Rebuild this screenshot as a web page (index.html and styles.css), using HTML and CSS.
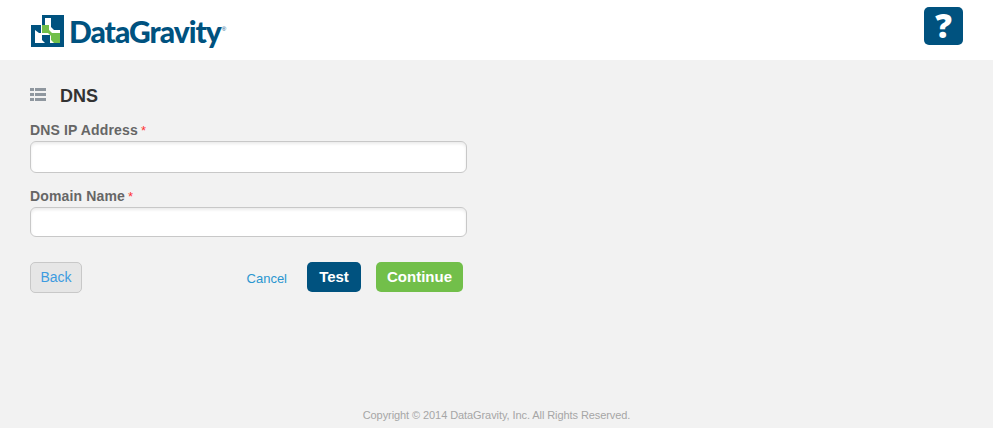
FILE: index.html
```html
<!DOCTYPE html>
<html lang="en">
<head>
    <meta charset="UTF-8">
    <title>DataGravity - DNS</title>
    <link rel="stylesheet" href="styles.css">
</head>
<body>
    <header class="topbar">
        <div class="logo">
            <svg class="logo-mark" width="33" height="32" viewBox="0 0 33 32">
                <path fill="#00527f" fill-rule="evenodd" d="M11 0H33V32H0V10H11ZM14 3V10H4V28H29V3Z"/>
                <path fill="#00527f" d="M20 3H29V15H23L20 12Z"/>
                <path fill="#00527f" d="M4 10H10V18H8L4 15Z"/>
                <path fill="#00527f" d="M11 20H19V28H14L11 25Z"/>
                <path fill="#72bf4a" d="M11 10H18V15L19 18H11Z"/>
                <path fill="#72bf4a" d="M20 18H29V28H23L20 25Z"/>
                <path fill="#72bf4a" d="M17 14L22 19L20 21L15 16Z"/>
            </svg>
            <span class="logo-text">DataGravity</span><span class="logo-reg">®</span>
        </div>
        <a class="help" href="#">?</a>
    </header>
    <main class="content">
        <h1 class="title">
            <svg class="title-icon" width="16" height="13" viewBox="0 0 16 13">
                <path fill="#8f979f" d="M0 0H4V3H0ZM5 0H16V3H5ZM0 5H4V8H0ZM5 5H16V8H5ZM0 10H4V13H0ZM5 10H16V13H5Z"/>
            </svg>
            DNS
        </h1>
        <form class="form">
            <label class="field-label">DNS IP Address<span class="req">*</span></label>
            <input class="field" type="text">
            <label class="field-label">Domain Name<span class="req">*</span></label>
            <input class="field field-short" type="text">
            <div class="actions">
                <a class="btn-back" href="#">Back</a>
                <div class="actions-right">
                    <a class="link-cancel" href="#">Cancel</a>
                    <a class="btn btn-test" href="#">Test</a>
                    <a class="btn btn-continue" href="#">Continue</a>
                </div>
            </div>
        </form>
    </main>
    <footer class="footer">Copyright © 2014 DataGravity, Inc. All Rights Reserved.</footer>
</body>
</html>
```

FILE: styles.css
```css
html, body {
    height: 100%;
}
body {
    margin: 0;
    background: #f2f2f2;
    font-family: "Liberation Sans", Arial, sans-serif;
    display: flex;
    flex-direction: column;
    overflow: hidden;
}
.topbar {
    height: 60px;
    background: #fff;
    display: flex;
    justify-content: space-between;
    padding: 7px 30px 0 31px;
    box-sizing: border-box;
}
.logo {
    display: flex;
    align-items: flex-start;
    padding-top: 8px;
}
.logo-mark {
    margin-right: 5px;
}
.logo-text {
    font-family: Lato, sans-serif;
    font-weight: 900;
    font-size: 30px;
    line-height: 37px;
    letter-spacing: -1px;
    color: #00527f;
    margin-top: -2px;
}
.logo-reg {
    font-size: 6px;
    color: #00527f;
    margin-top: 11px;
    margin-left: 1px;
}
.help {
    width: 39px;
    height: 38px;
    background: #00527f;
    border-radius: 5px;
    color: #fff;
    font-family: "Open Sans", sans-serif;
    font-weight: 800;
    font-size: 33px;
    line-height: 38px;
    text-align: center;
    text-decoration: none;
}
.content {
    flex: 1;
    padding: 0 30px;
}
.title {
    margin: 26px 0 0;
    height: 20px;
    display: flex;
    align-items: center;
    font-size: 18px;
    line-height: 20px;
    font-weight: bold;
    color: #333;
}
.title-icon {
    margin-right: 14px;
    margin-top: -3px;
}
.form {
    width: 437px;
    padding-top: 16px;
}
.field-label {
    display: block;
    font-size: 14px;
    line-height: 16px;
    font-weight: bold;
    letter-spacing: 0.15px;
    color: #666;
}
.req {
    color: #f33;
    font-size: 13px;
    font-weight: normal;
    margin-left: 3px;
}
.field {
    display: block;
    width: 100%;
    height: 32px;
    box-sizing: border-box;
    margin: 2px 0 15px;
    background: #fff;
    border: 1px solid #c8c8c8;
    border-radius: 6px;
    box-shadow: inset 0 2px 3px rgba(0, 0, 0, 0.08);
}
.field-short {
    height: 30px;
}
.actions {
    display: flex;
    justify-content: space-between;
    align-items: flex-start;
    margin-top: 25px;
}
.btn-back {
    width: 52px;
    height: 31px;
    box-sizing: border-box;
    background: #e6e6e6;
    border: 1px solid #c8c8c8;
    border-radius: 5px;
    color: #3d9be0;
    font-size: 14px;
    line-height: 29px;
    text-align: center;
    text-decoration: none;
}
.actions-right {
    display: flex;
    align-items: flex-start;
    padding-right: 4px;
}
.link-cancel {
    color: #2a96d0;
    font-size: 13px;
    line-height: 16px;
    margin: 9px 20px 0 0;
    text-decoration: none;
}
.btn {
    height: 30px;
    border-radius: 5px;
    color: #fff;
    font-size: 15px;
    font-weight: bold;
    line-height: 29px;
    text-align: center;
    text-decoration: none;
}
.btn-test {
    width: 54px;
    background: #00527f;
    margin-right: 15px;
}
.btn-continue {
    width: 87px;
    background: #72bf4a;
}
.footer {
    height: 26px;
    line-height: 26px;
    text-align: center;
    font-size: 11px;
    letter-spacing: -0.08px;
    color: #a6a6a6;
}
```
